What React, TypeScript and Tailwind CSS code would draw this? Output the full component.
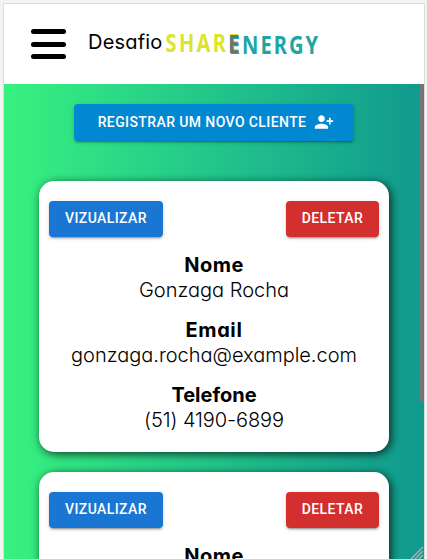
import React from "react";

type Client = { name: string; email: string; phone: string };

const clients: Client[] = [
  { name: "Gonzaga Rocha", email: "gonzaga.rocha@example.com", phone: "(51) 4190-6899" },
  { name: "Gonzaga Rocha", email: "gonzaga.rocha@example.com", phone: "(51) 4190-6899" },
];

const buttonShadow =
  "shadow-[0_3px_1px_-2px_rgba(0,0,0,0.2),0_2px_2px_0_rgba(0,0,0,0.14),0_1px_5px_0_rgba(0,0,0,0.12)]";
const buttonBase =
  "flex items-center justify-center rounded-[4px] font-['Roboto',sans-serif] text-[14px] font-medium leading-[24px] text-white whitespace-nowrap " +
  buttonShadow;

function Logo() {
  return (
    <svg
      width="156"
      height="34"
      viewBox="0 0 156 34"
      className="ml-px -mt-px"
      fontFamily="'Noto Sans', sans-serif"
      fontWeight="700"
      fontSize="24.5"
    >
      <g transform="scale(0.82 1)">
        <text x="-0.5" y="25" textLength="90" lengthAdjust="spacing" fill="#dce52c">SHARE</text>
        <text x="76.5" y="27" textLength="109" lengthAdjust="spacing" fill="#20a5a4">ENERGY</text>
        <text x="76" y="26" fontWeight="600" fill="#66736f">E</text>
      </g>
    </svg>
  );
}

function Header() {
  return (
    <header className="flex h-20 shrink-0 items-center bg-white pl-[27px]">
      <button aria-label="Menu" className="flex w-[35px] flex-col gap-[7.5px]">
        <span className="h-[5px] rounded-full bg-black" />
        <span className="h-[5px] rounded-full bg-black" />
        <span className="h-[5px] rounded-full bg-black" />
      </button>
      <span className="-mt-[3px] ml-[22px] w-[77px] whitespace-nowrap text-[20px] leading-[25px] tracking-[0.2px]">
        Desafio
      </span>
      <Logo />
    </header>
  );
}

type FieldProps = { label: string; value: string; labelSpacing: string; spacing: string };

function Field({ label, value, labelSpacing, spacing }: FieldProps) {
  return (
    <div className="text-center text-[20px] leading-[25px]">
      <div className={"font-bold " + labelSpacing}>{label}</div>
      <div className={"whitespace-nowrap font-light " + spacing}>{value}</div>
    </div>
  );
}

function ClientCard({ client }: { client: Client }) {
  return (
    <article className="h-[271px] w-[350px] shrink-0 rounded-[15px] bg-white px-[10px] pt-5 shadow-[2px_2px_10px_0_rgba(0,0,0,0.75)]">
      <div className="flex justify-between">
        <button className={buttonBase + " h-9 w-[114px] bg-[#1976d2] pb-0.5 tracking-[0.4px]"}>VIZUALIZAR</button>
        <button className={buttonBase + " h-9 w-[93px] bg-[#d32f2f] pb-0.5 tracking-[0.4px]"}>DELETAR</button>
      </div>
      <div className="mt-4 flex flex-col gap-[15px]">
        <Field label="Nome" value={client.name} labelSpacing="tracking-[0.5px]" spacing="tracking-[0px]" />
        <Field label="Email" value={client.email} labelSpacing="tracking-[0.6px]" spacing="tracking-[-0.02px]" />
        <Field label="Telefone" value={client.phone} labelSpacing="tracking-[0px]" spacing="tracking-[-0.1px]" />
      </div>
    </article>
  );
}

export default function App() {
  return (
    <div className="h-[559px] w-[427px] overflow-hidden bg-[#f3f3f3] pl-[3px] pt-[3px] font-['Inter',sans-serif] text-black [font-feature-settings:'cv11']">
      <div className="flex h-[557px] w-[422px] flex-col border border-b-0 border-[#dcdcdc]">
        <Header />
        <main className="relative flex min-h-0 flex-1 flex-col items-center gap-5 overflow-hidden bg-linear-to-r from-[#38f27e] to-[#11998e] pt-5">
          <button className={buttonBase + " mb-5 h-[37px] w-[280px] shrink-0 gap-2 bg-[#0288d1] pb-px pl-1 tracking-[0.4px]"}>
            <span>REGISTRAR UM NOVO CLIENTE</span>
            <svg viewBox="0 0 24 24" className="size-5" fill="currentColor">
              <path transform="translate(24 0) scale(-1 1)" d="M15 12c2.210 0 4-1.790 4-4s-1.790-4-4-4-4 1.790-4 4 1.790 4 4 4zm-9-2V7H4v3H1v2h3v3h2v-3h3v-2H6zm9 4c-2.670 0-8 1.340-8 4v2h16v-2c0-2.660-5.330-4-8-4z" />
            </svg>
          </button>
          {clients.map((client, index) => (
            <ClientCard key={index} client={client} />
          ))}
          <div className="absolute right-px top-0 h-[318px] w-[3px] bg-[#777575]" />
          <svg className="absolute bottom-0 right-0 text-[#b5aeb0]" width="15" height="15" viewBox="0 0 15 15" stroke="currentColor" strokeWidth="1.4">
            <path d="M2 14 14 2M6 14l8-8M10 14l4-4" />
          </svg>
        </main>
      </div>
    </div>
  );
}
